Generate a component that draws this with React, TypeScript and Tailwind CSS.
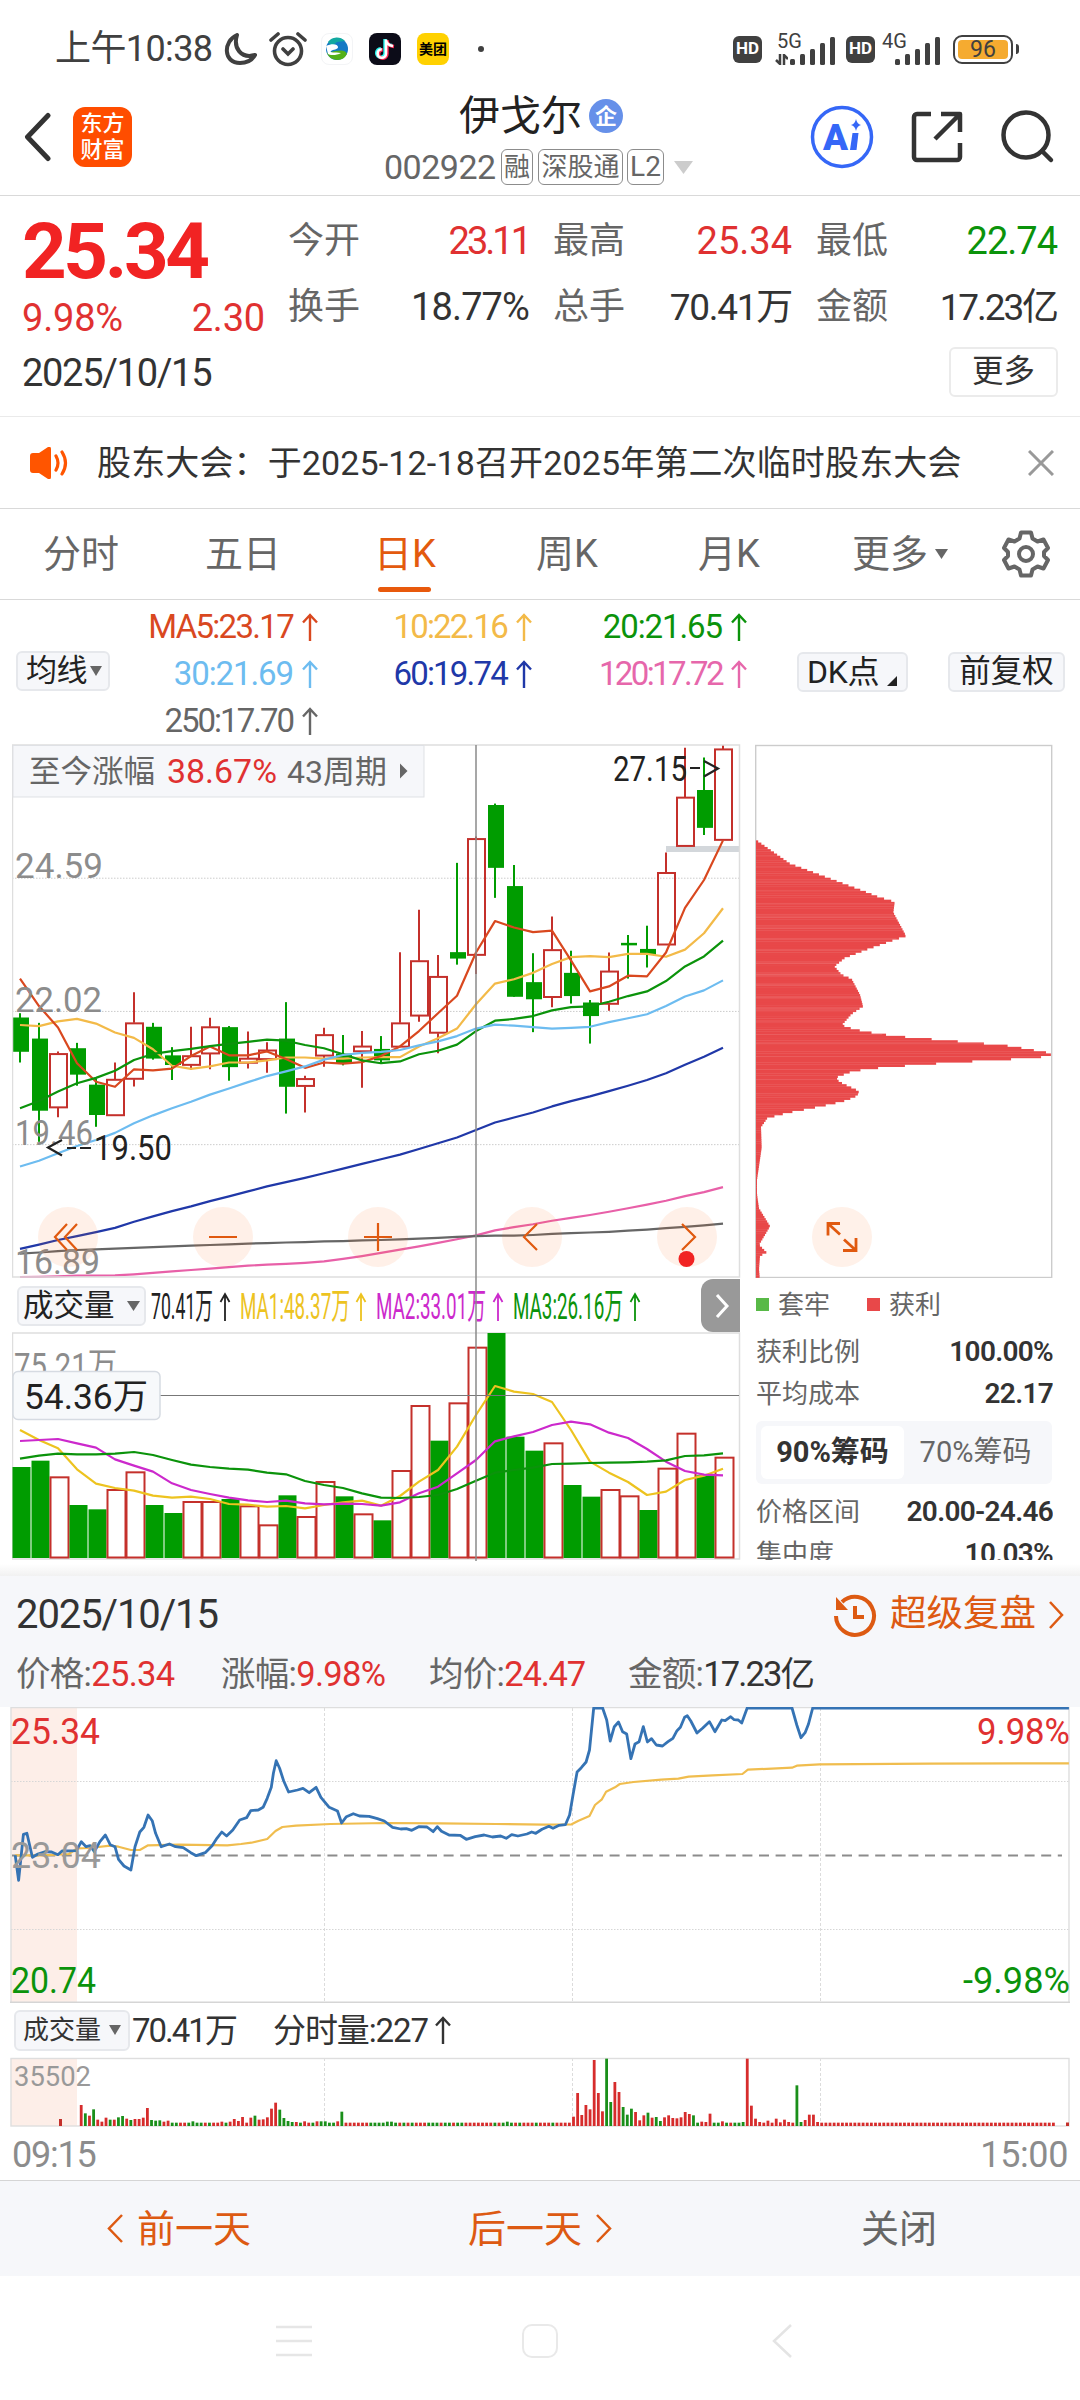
import type { ReactNode } from "react";

const UP = "#c4302b";
const DOWN = "#009c00";

/* top, bottom, high, low of every candle */
const candles: [string, number, number, number, number][] = [
  ["g", 777, 873, 765, 903],
  ["g", 836, 1038, 792, 1125],
  ["r", 878, 1030, 872, 1056],
  ["g", 863, 937, 848, 968],
  ["g", 965, 1050, 948, 1083],
  ["r", 950, 1052, 903, 1052],
  ["r", 792, 950, 706, 970],
  ["g", 803, 892, 792, 895],
  ["g", 883, 910, 860, 952],
  ["r", 884, 911, 803, 924],
  ["r", 803, 879, 778, 922],
  ["g", 804, 916, 801, 954],
  ["r", 891, 905, 816, 920],
  ["r", 868, 895, 846, 932],
  ["g", 836, 971, 734, 1046],
  ["r", 948, 970, 940, 1043],
  ["r", 825, 885, 806, 915],
  ["g", 878, 906, 826, 911],
  ["r", 857, 873, 815, 974],
  ["g", 865, 897, 829, 905],
  ["r", 792, 860, 594, 860],
  ["r", 618, 773, 475, 789],
  ["r", 662, 821, 602, 877],
  ["g", 594, 612, 344, 629],
  ["r", 276, 603, 270, 655],
  ["g", 182, 358, 178, 442],
  ["g", 409, 719, 350, 719],
  ["g", 678, 726, 597, 818],
  ["r", 587, 721, 494, 748],
  ["g", 652, 717, 590, 738],
  ["g", 735, 773, 728, 850],
  ["r", 647, 740, 595, 758],
  ["g", 568, 575, 546, 668],
  ["g", 585, 602, 520, 637],
  ["r", 371, 574, 315, 574],
  ["r", 160, 298, 22, 298],
  ["g", 140, 246, 49, 266],
  ["r", 25, 281, 14, 281],
];

const priceLines: [string, number[]][] = [
  ["#f3ba48", [798, 801, 788, 781, 794, 819, 834, 866, 912, 921, 914, 903, 903, 897, 889, 889, 892, 892, 889, 888, 888, 858, 835, 808, 740, 682, 670, 652, 627, 608, 605, 608, 599, 599, 607, 587, 541, 471]],
  ["#d9481f", [668, 745, 805, 905, 957, 971, 922, 925, 920, 885, 858, 883, 883, 872, 893, 918, 903, 906, 902, 885, 858, 815, 765, 716, 595, 507, 525, 538, 534, 617, 704, 690, 660, 662, 595, 470, 392, 281]],
  ["#0b930b", [1031, 1011, 984, 961, 946, 926, 896, 879, 871, 865, 857, 851, 845, 839, 842, 854, 863, 880, 897, 905, 900, 880, 870, 853, 815, 786, 781, 773, 757, 748, 746, 733, 717, 704, 675, 634, 606, 562]],
  ["#6dbcf0", [1194, 1178, 1157, 1137, 1120, 1100, 1073, 1051, 1031, 1013, 993, 976, 958, 941, 928, 914, 895, 882, 876, 873, 868, 855, 844, 829, 808, 797, 800, 804, 808, 806, 803, 790, 779, 768, 745, 718, 701, 673]],
  ["#2038a8", [1425, 1413, 1400, 1389, 1378, 1366, 1349, 1334, 1319, 1306, 1291, 1278, 1264, 1250, 1238, 1226, 1213, 1200, 1187, 1174, 1161, 1145, 1129, 1113, 1092, 1071, 1057, 1043, 1026, 1011, 998, 983, 968, 952, 933, 909, 887, 862]],
  ["#e860a8", [1504, 1503, 1502, 1500, 1500, 1499, 1496, 1492, 1488, 1484, 1480, 1476, 1472, 1469, 1467, 1464, 1460, 1453, 1445, 1436, 1427, 1418, 1408, 1398, 1387, 1373, 1364, 1356, 1346, 1338, 1330, 1321, 1311, 1301, 1290, 1277, 1266, 1252]],
  ["#666666", [1438, 1435, 1431, 1428, 1426, 1424, 1422, 1420, 1418, 1416, 1414, 1412, 1410, 1409, 1407, 1406, 1404, 1403, 1401, 1400, 1398, 1396, 1394, 1391, 1389, 1388, 1388, 1386, 1383, 1381, 1379, 1377, 1374, 1371, 1367, 1363, 1359, 1354]],
];

const volumes: [string, number][] = [
  ["g", 561], ["g", 542], ["r", 592], ["g", 675], ["g", 688], ["r", 630], ["r", 577], ["g", 675],
  ["g", 699], ["r", 666], ["r", 666], ["g", 657], ["r", 679], ["r", 736], ["g", 646], ["r", 711],
  ["r", 606], ["g", 649], ["r", 703], ["g", 721], ["r", 573], ["r", 378], ["g", 482], ["r", 370],
  ["r", 203], ["g", 159], ["g", 470], ["g", 512], ["r", 490], ["g", 615], ["g", 650], ["r", 630],
  ["r", 649], ["g", 690], ["r", 566], ["r", 461], ["g", 586], ["r", 533],
];

const volumeLines: [string, number[]][] = [
  ["#edc31f", [450, 480, 505, 568, 611, 624, 632, 647, 653, 650, 657, 672, 674, 680, 678, 685, 675, 667, 662, 677, 648, 605, 570, 500, 405, 318, 335, 342, 366, 450, 545, 578, 606, 645, 635, 600, 587, 566]],
  ["#cc29cc", [483, 480, 477, 490, 503, 538, 557, 575, 610, 630, 642, 653, 661, 666, 662, 670, 673, 671, 672, 677, 667, 640, 620, 580, 540, 484, 469, 456, 435, 425, 433, 458, 474, 507, 545, 573, 584, 586]],
  ["#0b930b", [536, 527, 521, 523, 523, 521, 516, 525, 540, 554, 561, 566, 569, 578, 583, 603, 615, 624, 640, 653, 654, 651, 645, 627, 602, 578, 570, 563, 552, 551, 549, 548, 547, 545, 541, 528, 526, 520]],
];

/* chip distribution: level, width */
const chips: [number, number][] = [
  [280, 2], [345, 102], [392, 237], [418, 312], [438, 367], [452, 416], [482, 412], [547, 450],
  [562, 402], [585, 332], [608, 267], [632, 235], [656, 257], [668, 287], [712, 312], [744, 321],
  [765, 287], [797, 257], [806, 285], [815, 325], [828, 417], [833, 482], [839, 559], [845, 635], [851, 712],
  [857, 777], [863, 805], [870, 852], [877, 889], [884, 877], [890, 800], [896, 687], [902, 573],
  [908, 482], [914, 390], [920, 332], [926, 289], [943, 240], [956, 250], [982, 309], [994, 304],
  [1007, 272], [1018, 225], [1030, 162], [1042, 95], [1057, 34], [1082, 15], [1140, 17], [1230, 3],
  [1270, 3], [1310, 9], [1360, 42], [1412, 9], [1434, 32], [1442, 12], [1480, 9], [1503, 11],
];
const chipSeams = [323, 354, 390, 396, 421, 457, 488, 494, 519, 525, 555, 586, 623, 654, 659, 684, 720, 751, 757, 788, 823, 849, 885, 921, 949, 989, 1018, 1048];

const pricePath =
  "22,466 27,541 34,403 39,400 47,472 55,462 66,455 75,456 84,464 90,453 111,452 118,425 125,440 131,437 137,455 145,425 153,405 160,434 167,440 172,478 180,498 190,510 196,440 203,396 209,382 215,345 221,362 226,400 234,440 246,432 255,440 266,443 277,458 285,467 298,458 308,437 315,415 322,396 329,408 338,390 348,360 358,353 364,332 375,330 382,322 388,295 394,262 397,220 401,182 406,205 412,243 419,276 432,270 440,265 449,278 459,262 466,292 478,322 490,333 496,369 503,350 513,341 522,348 536,349 548,356 558,363 570,382 582,387 590,386 598,391 608,380 620,381 629,395 635,380 641,394 652,405 668,406 677,418 690,410 703,405 715,411 727,408 735,415 743,404 752,408 765,402 772,396 778,400 787,388 797,379 803,385 812,376 821,374 827,345 832,285 838,216 844,203 851,186 856,150 862,24 875,24 881,60 886,123 892,80 898,66 904,95 910,102 916,176 922,132 928,125 934,80 940,126 946,116 953,135 962,138 970,125 977,115 983,92 988,82 994,52 998,47 1003,63 1012,99 1020,85 1030,65 1038,95 1048,60 1053,62 1061,50 1066,59 1072,60 1077,69 1085,24 1150,24 1157,75 1163,113 1169,98 1174,72 1180,24 1552,24";
const averagePath =
  "22,466 60,466 100,462 112,445 130,444 160,437 172,440 190,450 203,450 215,436 260,434 330,436 350,432 365,428 388,417 400,393 410,381 430,377 480,372 560,369 640,370 720,372 790,374 830,373 840,362 856,348 864,315 874,298 880,275 893,262 900,252 920,246 960,239 985,236 1000,230 1035,226 1078,222 1086,209 1150,203 1157,197 1190,193 1350,191 1552,190";

/* minute volume: height and colour runs, anything not listed is a flat red bar */
const minuteBars: Record<number, [number, string]> = {};
const fill = (start: number, list: string) =>
  list.split(" ").forEach((s, i) => {
    minuteBars[start + i] = [parseInt(s), s.slice(-1)];
  });
fill(0, "63r 38g 31r 50g 19r 13r 25r 19g 19r 26g 30g 22r 18g 21r 21r 25r 54r 18g 16g 17g 13r 16r 10g 10g 10r 10r 10g 14g 10g 10g 10r 10g 10r 10r 13r 10g 13r 21r 15r 27r 10r 25r 31g 19r 20r 26r 52r 70r 49g 24g 15g 12g 12r 10g 14r 10r 10g 14r 14g 14g 10g 10g 14r 43g");
fill(70, "10g 10g 10g 10g 13g 13g 10g 10r 10g 10r 10g 10r 10r 10r 10g 10g 10g 10r 10g 10g 10r 10g 10g 10r");
fill(100, "10g 10r 10g 13g 10g 10r 10g");
fill(110, "10g 10r 10r 10r 10g 10r 10r 10r 10r 28r 99r 33r 63r 50r 198r 99r 44r 202g 72g 132r 102r 57g 34g 52g 42r 17r 32r 40g 25r 27g 15g 26r 32r 24r 23r 26r 42r 36r 32g 10g 13r 12r 37r 10g 10g 14r 10g 10r 10g 10g 12g 202r 61r 22r 12r 10r 16r 10r 22r 11r 19r 12r 10r 122g 12g 18r 34r 34r 12r");

const cx = (i: number) => 20 + 19 * i;
const py = (v: number) => 740 + v / 2.8;
const vy = (v: number) => 1280 + v / 3;
const minute = (pts: string) =>
  pts
    .split(" ")
    .map((p) => p.split(",").map(Number))
    .map(([x, y]) => `${(x / 1.452).toFixed(1)},${(1700 + y / 3).toFixed(1)}`)
    .join(" ");

function chipWidth(v: number) {
  const i = Math.max(1, chips.findIndex((c) => c[0] >= v));
  const [a, wa] = chips[i - 1];
  const [b, wb] = chips[i];
  return (wa + ((wb - wa) * (v - a)) / (b - a)) / 3;
}

/* svg label squeezed to a fixed width */
function Label({ x, y, w, size, fill, children }: { x: number; y: number; w: number; size: number; fill: string; children: ReactNode }) {
  return (
    <text x={x} y={y} fontSize={size} fill={fill} textLength={w} lengthAdjust="spacingAndGlyphs">
      {children}
    </text>
  );
}

function ArrowUp({ className = "" }: { className?: string }) {
  return (
    <svg width="16" height="28" viewBox="0 0 16 28" fill="none" stroke="currentColor" strokeWidth="2.4" className={className}>
      <path d="M8 28V2M1 9.5L8 2l7 7.5" />
    </svg>
  );
}

function Triangle({ className }: { className: string }) {
  return (
    <svg viewBox="0 0 12 10" preserveAspectRatio="none" fill="currentColor" className={className}>
      <path d="M0 0h12L6 10z" />
    </svg>
  );
}

function Signal() {
  return (
    <svg width="45" height="28" viewBox="0 0 45 28" fill="#404040">
      <rect x="0" y="22" width="5" height="6" rx="1.5" />
      <rect x="10" y="17" width="5" height="11" rx="1.5" />
      <rect x="20" y="12" width="5" height="16" rx="1.5" />
      <rect x="30" y="6" width="5" height="22" rx="1.5" />
      <rect x="40" y="0" width="5" height="28" rx="1.5" />
    </svg>
  );
}

function StatusBar() {
  return (
    <div className="flex h-[84px] items-center pt-[14px] pl-[55px] text-[#404040]">
      <span className="w-[169px] text-[36px] leading-none tracking-[-0.6px] whitespace-nowrap">上午10:38</span>
      <svg width="33" height="34" viewBox="0 0 33 34" fill="none" stroke="#404040" strokeWidth="4" strokeLinejoin="round">
        <path d="M13 3C-1 9-1 31 16 31c7 0 12-3 15-8C17 27 9 16 13 3z" />
      </svg>
      <svg width="38" height="36" viewBox="0 0 38 36" fill="none" stroke="#404040" strokeWidth="3.6" strokeLinecap="round" className="ml-3">
        <circle cx="19" cy="20" r="13.5" />
        <path d="M2 9l7-6M36 9l-7-6M14 18l5 5 5-5" />
      </svg>
      <div className="ml-[14px] flex size-8 items-center justify-center rounded-lg border border-gray-100">
        <svg width="24" height="24" viewBox="0 0 24 24">
          <circle cx="12" cy="12" r="11" fill="#1479c4" />
          <path d="M3 5a11 11 0 0117-1l-8 1-5 4z" fill="#12a9a0" />
          <path d="M2 16a11 11 0 0020 1c-2-5-8-3-12-3z" fill="#54b018" />
          <path d="M1 9c6-3 12-2 12 1s-5 2-7 4 4 1 10 2c-5 3-12 2-13 1z" fill="#fff" />
        </svg>
      </div>
      <div className="ml-4 flex size-8 items-center justify-center rounded-lg bg-[#0c0c18]">
        <svg width="22" height="24" viewBox="0 0 22 24" fill="none" strokeWidth="3.4">
          <path d="M11 2v14a4.2 4.2 0 1 1-4.2-4.2M11 3c1 4 3 5 7 5.5" stroke="#25f4ee" />
          <path d="M13 3v14a4.2 4.2 0 1 1-4.2-4.2M13 4c1 4 3 5 7 5.5" stroke="#fe2c55" />
          <path d="M12 2.5v14a4.2 4.2 0 1 1-4.2-4.2M12 3.5c1 4 3 5 7 5.5" stroke="#fff" strokeWidth="2.6" />
        </svg>
      </div>
      <div className="ml-4 flex size-8 items-center justify-center rounded-lg bg-[#ffd100] text-[14px] leading-none font-bold text-black">美团</div>
      <div className="ml-[29px] size-[6px] rounded-full bg-[#404040]" />
      <div className="ml-[249px] flex h-[27px] w-[29px] items-center justify-center rounded-md bg-[#404040] text-[17px] font-bold text-white">HD</div>
      <div className="relative ml-[13px] h-[32px] w-[60px]">
        <span className="absolute top-[-2px] left-[2px] text-[20px] leading-none">5G</span>
        <svg width="13" height="11" viewBox="0 0 13 11" stroke="#404040" strokeWidth="2.5" fill="none" className="absolute bottom-0 left-0">
          <path d="M5 0v10L1 6M9 11V1l4 4" />
        </svg>
        <div className="absolute right-0 bottom-0">
          <Signal />
        </div>
      </div>
      <div className="ml-[11px] flex h-[27px] w-[29px] items-center justify-center rounded-md bg-[#404040] text-[17px] font-bold text-white">HD</div>
      <div className="relative ml-[7px] h-[32px] w-[58px]">
        <span className="absolute top-[-2px] left-0 text-[20px] leading-none">4G</span>
        <div className="absolute right-0 bottom-0">
          <Signal />
        </div>
      </div>
      <div className="ml-[13px] flex h-[29px] w-[60px] rounded-[9px] border-[2.5px] border-[#404040] p-[3px]">
        <div className="flex flex-1 items-center justify-center rounded-[4px] bg-[#f5ab30] text-[23px] leading-none">96</div>
      </div>
      <div className="ml-[3px] h-[10px] w-[3px] rounded-r bg-[#404040]" />
    </div>
  );
}

function Header() {
  return (
    <header className="flex h-28 items-start border-b border-[#d9d9d9]">
      <svg width="27" height="50" viewBox="0 0 27 50" fill="none" stroke="#333" strokeWidth="5" strokeLinejoin="round" strokeLinecap="round" className="mt-7 ml-6">
        <path d="M24 3.5L3.5 25 24 46.5" />
      </svg>
      <div className="mt-[23px] ml-[22px] flex h-[60px] w-[59px] flex-col items-center justify-center rounded-xl bg-[#ff4d00] text-[22px] leading-[26px] font-medium text-white">
        <span>东方</span>
        <span>财富</span>
      </div>
      <div className="ml-[252px] flex w-[310px] flex-col">
        <div className="mt-2 ml-[75px] flex h-12 items-center">
          <span className="text-[41px] leading-none text-[#222]">伊戈尔</span>
          <span className="ml-[7px] flex size-[34px] items-center justify-center rounded-full bg-[#6690e9] text-[22px] font-bold text-white">企</span>
        </div>
        <div className="mt-[9px] flex h-9 items-center text-[#666]">
          <span className="w-[117px] text-[34px] leading-none tracking-[-0.5px]">002922</span>
          <span className="flex h-9 w-8 items-center justify-center rounded-[6px] border border-[#8c8c8c] text-[26px]">融</span>
          <span className="ml-[5px] flex h-9 w-[85px] items-center justify-center rounded-[6px] border border-[#8c8c8c] text-[26px]">深股通</span>
          <span className="ml-1 flex h-9 w-[37px] items-center justify-center rounded-[6px] border border-[#8c8c8c] text-[28px]">L2</span>
          <Triangle className="ml-[10px] h-[13px] w-[19px] text-[#ccc]" />
        </div>
      </div>
      <svg width="64" height="64" viewBox="0 0 64 64" className="mt-[21px] ml-[116px]">
        <circle cx="32" cy="32" r="29.5" fill="none" stroke="#3567f7" strokeWidth="3.5" />
        <text x="13" y="45" fontSize="37" fontWeight="900" fill="#3567f7" textLength="25" lengthAdjust="spacingAndGlyphs">
          A
        </text>
        <path d="M42.500 28h6l-2 17h-6.500z" fill="#3567f7" />
        <path d="M46 14q1 5 5 6-4 1-5 6-1-5-5-6 4-1 5-6z" fill="#3567f7" />
      </svg>
      <svg width="54" height="54" viewBox="0 0 54 54" fill="none" stroke="#333" strokeWidth="4.5" strokeLinejoin="round" className="mt-[26px] ml-[36px]">
        <path d="M21 4H7a3 3 0 00-3 3v40a3 3 0 003 3h40a3 3 0 003-3V33M31 4h19v18M50 4L25 29" />
      </svg>
      <svg width="56" height="56" viewBox="0 0 56 56" fill="none" stroke="#333" strokeWidth="4.5" strokeLinecap="round" className="mt-[24px] ml-[36px]">
        <circle cx="26" cy="27" r="22.5" />
        <path d="M42 43l9 9" />
      </svg>
    </header>
  );
}

function Quote({ label, value, className }: { label: string; value: string; className: string }) {
  return (
    <div className="flex h-[66px] items-center justify-between leading-none">
      <span className="text-[36px] text-[#666]">{label}</span>
      <span className={className}>{value}</span>
    </div>
  );
}

function Summary() {
  return (
    <section className="flex h-[221px] flex-col border-b border-[#eaeaea] pl-[22px]">
      <div className="flex h-[141px] pt-3">
        <div className="w-[266px] leading-none">
          <div className="mt-[5px] text-[78px] leading-[78px] font-bold tracking-[-3.4px] text-[#f12323]">25.34</div>
          <div className="mt-[8px] flex w-[243px] justify-between text-[38px] tracking-[-0.2px] text-[#e03131]">
            <span>9.98%</span>
            <span>2.30</span>
          </div>
        </div>
        <div className="grid w-[769px] grid-cols-[241px_239px_241px] gap-x-[24px] text-[38px]">
          <Quote label="今开" value="23.11" className="tracking-[-3px] text-[#e03131]" />
          <Quote label="最高" value="25.34" className="text-[#e03131]" />
          <Quote label="最低" value="22.74" className="tracking-[-1px] text-[#0b930b]" />
          <Quote label="换手" value="18.77%" className="tracking-[-0.9px] text-[#333]" />
          <Quote label="总手" value="70.41万" className="text-[37px] tracking-[-1.3px] text-[#333]" />
          <Quote label="金额" value="17.23亿" className="text-[37px] tracking-[-2.1px] text-[#333]" />
        </div>
      </div>
      <div className="flex items-center justify-between pt-[10px] pr-[22px]">
        <span className="pt-[2px] text-[38px] leading-none tracking-[-1.3px] text-[#333]">2025/10/15</span>
        <span className="flex h-[50px] w-[109px] items-center justify-center rounded-md border-2 border-[#ebebeb] text-[31.5px] text-[#333]">更多</span>
      </div>
    </section>
  );
}

function Notice() {
  return (
    <div className="flex h-[92px] items-center border-b border-[#d9d9d9] pl-[30px]">
      <svg width="40" height="32" viewBox="0 0 40 32" className="text-[#ff5500]">
        <path d="M0 9q0-3 3-3h6l9-6q3-1 3 2v28q0 3-3 2l-9-6H3q-3 0-3-3z" fill="currentColor" />
        <path d="M26 9q4 7 0 14M32 5q7 11 0 22" stroke="currentColor" strokeWidth="3.2" fill="none" strokeLinecap="round" />
      </svg>
      <span className="ml-[27px] w-[931px] text-[34px] leading-none tracking-[0.14px] whitespace-nowrap text-[#333]">股东大会：于2025-12-18召开2025年第二次临时股东大会</span>
      <svg width="26" height="26" viewBox="0 0 26 26" stroke="#999" strokeWidth="3">
        <path d="M1 1l24 24M25 1L1 25" />
      </svg>
    </div>
  );
}

function Tabs() {
  return (
    <nav className="flex h-[91px] items-center border-b border-[#d9d9d9] text-[38px] leading-none text-[#666]">
      <span className="w-[162px] text-center">分时</span>
      <span className="w-[162px] text-center">五日</span>
      <div className="relative w-[162px] text-center text-[#e35a0e]">
        日K
        <div className="absolute -bottom-[19px] left-[54px] h-[5px] w-[53px] rounded-full bg-[#e8590c]" />
      </div>
      <span className="w-[162px] text-center">周K</span>
      <span className="w-[162px] text-center">月K</span>
      <span className="ml-[42px] w-[83px]">更多</span>
      <Triangle className="h-[10px] w-[13px]" />
      <svg width="50" height="50" viewBox="0 0 50 50" fill="none" stroke="#666" strokeWidth="4" strokeLinejoin="round" className="ml-[53px]">
        <path d="M20 3.5h10l1.5 6 5 3 6-2 4.5 8.5-4 4v4l4 4-4.5 8.5-6-2-5 3-1.500 6H20l-1.500-6-5-3-6 2L3 31l4-4v-4l-4-4 4.500-8.500 6 2 5-3z" />
        <circle cx="25" cy="25" r="7" />
      </svg>
    </nav>
  );
}

function Average({ className, children }: { className: string; children: string }) {
  return (
    <div className={`flex h-[47px] items-center justify-end gap-[9px] text-[33px] leading-none ${className}`}>
      {children}
      <ArrowUp />
    </div>
  );
}

function Averages() {
  return (
    <div className="flex h-[144px] items-start">
      <div className="mt-[51px] ml-4 flex h-10 w-[94px] items-center rounded-md border-2 border-[#e6e8ec] bg-[#f6f7fa] pl-[8px] text-[31px] tracking-[-0.5px] text-[#222]">
        均线
        <Triangle className="ml-[3px] h-[10px] w-3 text-[#666]" />
      </div>
      <div className="mt-[3px] grid grid-cols-[208px_214px_215px]">
        <Average className="tracking-[-1.7px] text-[#d9481f]">MA5:23.17</Average>
        <Average className="tracking-[-1.8px] text-[#f3ba48]">10:22.16</Average>
        <Average className="tracking-[-1.1px] text-[#0b930b]">20:21.65</Average>
        <Average className="tracking-[-1.1px] text-[#6dbcf0]">30:21.69</Average>
        <Average className="tracking-[-1.8px] text-[#2038a8]">60:19.74</Average>
        <Average className="tracking-[-2.6px] text-[#e667ab]">120:17.72</Average>
        <Average className="tracking-[-2px] text-[#666]">250:17.70</Average>
      </div>
      <div className="mt-[52px] ml-[50px] flex h-10 w-[111px] items-center rounded-md border-2 border-[#e6e8ec] bg-[#f6f7fa] pl-[8px] text-[32px] tracking-[-0.3px] text-[#222]">
        DK点
        <svg width="10" height="10" className="mt-[18px] ml-[8px] shrink-0">
          <path d="M10 0v10H0z" fill="#222" />
        </svg>
      </div>
      <div className="mt-[52px] ml-10 flex h-10 w-[117px] items-center justify-center rounded-md border-2 border-[#e6e8ec] bg-[#f6f7fa] text-[31.5px] text-[#222]">前复权</div>
    </div>
  );
}

function KLine() {
  return (
    <svg width="729" height="534" viewBox="12 744 729 534" className="block">
      {[387, 760, 1133].map((v) => (
        <path key={v} d={`M12 ${py(v)}H739`} stroke="#ccc" strokeWidth="1" strokeDasharray="1.5 1.5" />
      ))}
      <rect x="666" y="846" width="73" height="6" fill="#d3d7db" />
      {candles.map(([c, top, bottom, high, low], i) =>
        c === "g" ? (
          <g key={i} fill={DOWN}>
            <rect x={cx(i) - 1} y={py(high)} width="2" height={py(low) - py(high)} />
            <rect x={cx(i) - 7} y={py(top)} width="16" height={py(bottom) - py(top)} />
          </g>
        ) : (
          <g key={i} fill="none" stroke={UP} strokeWidth="2">
            <path d={`M${cx(i)} ${py(high)}V${py(top)}M${cx(i)} ${py(bottom)}V${py(low)}`} />
            <rect x={cx(i) - 8} y={py(top) + 0.5} width="17" height={py(bottom) - py(top) - 1} />
          </g>
        ),
      )}
      {priceLines.map(([color, values]) => (
        <polyline key={color} points={values.map((v, i) => `${cx(i)},${py(v)}`).join(" ")} fill="none" stroke={color} strokeWidth="2.2" strokeLinejoin="round" />
      ))}
      <rect x="12.5" y="745" width="727" height="532" fill="none" stroke="#dedede" strokeWidth="1.5" />
      <rect x="13" y="745.5" width="411" height="51.5" fill="#f6f7fa" stroke="#dfe1e5" />
      <Label x={29} y={782} w={126} size={31} fill="#666">至今涨幅</Label>
      <Label x={167} y={783} w={110} size={33} fill="#e03131">38.67%</Label>
      <Label x={287} y={783} w={100} size={32} fill="#666">43周期</Label>
      <path d="M400 763.5v15l7.500-7.500z" fill="#666" />
      <Label x={15} y={878} w={88} size={35} fill="#8c8c8c">24.59</Label>
      <Label x={15} y={1012} w={87} size={35} fill="#8c8c8c">22.02</Label>
      <Label x={15} y={1145} w={78} size={35} fill="#8c8c8c">19.46</Label>
      <Label x={15} y={1274} w={85} size={35} fill="#8c8c8c">16.89</Label>
      <Label x={94} y={1160} w={78} size={35} fill="#222">19.50</Label>
      <path d="M62 1140l-14 7.500 14 8M67 1148h9M80 1148h11" stroke="#222" strokeWidth="2.2" fill="none" />
      <Label x={613} y={781} w={74} size={35} fill="#222">27.15</Label>
      <path d="M690 768h10M704 761l14 7.500-14 8" stroke="#222" strokeWidth="2.2" fill="none" />
      {[68, 223, 378, 532, 687].map((x) => (
        <circle key={x} cx={x} cy="1237" r="30" fill="#fb6a1a" fillOpacity="0.1" />
      ))}
      <g fill="none" stroke="#e0590f" strokeWidth="2.2">
        <path d="M67 1224l-12 13 12 13M77 1224l-12 13 12 13M209 1237h28M364 1237h28M378 1223v28M537 1224l-13 13 13 13M682 1224l13 13-13 13" />
      </g>
      <circle cx="686.5" cy="1259" r="8" fill="#f12323" />
      <path d="M476 745v533" stroke="#8a8a8a" strokeWidth="1.5" />
    </svg>
  );
}

function VolumeHeader() {
  return (
    <div className="flex h-[54px]">
      <div className="mt-2 ml-[5px] flex h-10 w-[129px] items-center rounded-md border-2 border-[#e6e8ec] bg-[#f6f7fa] pl-[4px] text-[30.5px] text-[#222]">
        成交量
        <Triangle className="ml-[12px] h-[10px] w-[13px] text-[#666]" />
      </div>
      <svg width="555" height="54" viewBox="146 1278 555 54">
        <Label x={151} y={1319} w={62} size={36} fill="#222">70.41万</Label>
        <Label x={240} y={1319} w={110} size={36} fill="#edc31f">MA1:48.37万</Label>
        <Label x={376} y={1319} w={110} size={36} fill="#cc29cc">MA2:33.01万</Label>
        <Label x={513} y={1319} w={110} size={36} fill="#0b930b">MA3:26.16万</Label>
        {[["#222", 225], ["#edc31f", 361], ["#cc29cc", 498], ["#0b930b", 635]].map(([c, x]) => (
          <path key={x} d={`M${x} 1321v-27m-4.500 8l4.500-8 4.500 8`} stroke={c as string} strokeWidth="1.8" fill="none" />
        ))}
        <path d="M476 1278v54" stroke="#8a8a8a" strokeWidth="1.5" />
      </svg>
      <div className="mt-[1px] flex h-[53px] w-[39px] items-center justify-center rounded-l-xl bg-[#999]">
        <svg width="16" height="26" viewBox="0 0 16 26" fill="none" stroke="#fff" strokeWidth="3" className="ml-1">
          <path d="M2 2l10 11L2 24" />
        </svg>
      </div>
    </div>
  );
}

function Volume() {
  return (
    <svg width="729" height="229" viewBox="12 1332 729 229" className="block">
      <path d="M12 1333H739.5V1559H12.5V1333" fill="none" stroke="#dedede" strokeWidth="1.5" />
      <Label x={14} y={1378} w={103} size={35} fill="#8c8c8c">75.21万</Label>
      {volumes.map(([c, top], i) =>
        c === "g" ? (
          <rect key={i} x={cx(i) - 7.5} y={vy(top)} width="18" height={1558 - vy(top)} fill={DOWN} />
        ) : (
          <rect key={i} x={cx(i) - 7.5} y={vy(top)} width="18" height={1557.5 - vy(top)} fill="#fff" stroke={UP} strokeWidth="2" />
        ),
      )}
      {volumeLines.map(([color, values]) => (
        <polyline key={color} points={values.map((v, i) => `${cx(i)},${vy(v)}`).join(" ")} fill="none" stroke={color} strokeWidth="2.2" strokeLinejoin="round" />
      ))}
      <path d="M160 1395.5H739" stroke="#777" />
      <path d="M476 1332v229" stroke="#8a8a8a" strokeWidth="1.5" />
      <rect x="13" y="1371.5" width="147" height="48" rx="5" fill="#f7f9fb" stroke="#d6dbe2" strokeWidth="1.5" />
      <Label x={24} y={1409} w={124} size={35} fill="#222">54.36万</Label>
    </svg>
  );
}

function Chips() {
  const rows = Array.from({ length: 200 }, (_, i) => 281 + i * 6.15).filter((v) => v < 1501);
  return (
    <svg width="298" height="534" viewBox="755 744 298 534" className="block">
      <rect x="755.7" y="745.5" width="296" height="532" fill="none" stroke="#ccc" strokeWidth="1.4" />
      {rows.map((v) => (
        <rect key={v} x="756" y={py(v)} width={chipWidth(v + 2)} height="2.6" fill="#e84849" />
      ))}
      {chipSeams.map((v) => (
        <rect key={v} x="756" y={py(v)} width={chipWidth(v) - 1} height="1" fill="#fff" fillOpacity="0.12" />
      ))}
      <circle cx="842" cy="1237" r="30" fill="#fff1e9" />
      <path d="M840 1223.5h-12v12M828 1223.5l12 11M844 1239.5l12 11M856 1238v12.500h-13" fill="none" stroke="#e0590f" strokeWidth="2.8" />
    </svg>
  );
}

function ChipRow({ label, value }: { label: string; value: string }) {
  return (
    <div className="flex h-[42px] shrink-0 items-center justify-between leading-none">
      <span className="text-[26px] text-[#666]">{label}</span>
      <span className="text-[28px] font-semibold tracking-[-0.7px] text-[#333]">{value}</span>
    </div>
  );
}

function ChipStats() {
  return (
    <div className="ml-px flex h-[282px] w-[297px] flex-col overflow-hidden">
      <div className="flex h-[53px] shrink-0 items-center text-[26px] leading-none text-[#666]">
        <div className="size-[13px] bg-[#58b947]" />
        <span className="ml-[9px] w-[89px]">套牢</span>
        <div className="size-[13px] bg-[#e84849]" />
        <span className="ml-[9px]">获利</span>
      </div>
      <ChipRow label="获利比例" value="100.00%" />
      <ChipRow label="平均成本" value="22.17" />
      <div className="mt-[6px] mr-px mb-[7px] flex h-[63px] shrink-0 items-center rounded-md bg-[#f6f7fa] p-[5px] text-[29px] leading-none">
        <span className="flex h-[53px] w-[143px] items-center justify-center rounded-md bg-white font-bold text-[#333]">90%筹码</span>
        <span className="flex-1 text-center text-[#666]">70%筹码</span>
      </div>
      <ChipRow label="价格区间" value="20.00-24.46" />
      <ChipRow label="集中度" value="10.03%" />
    </div>
  );
}

function Field({ label, value, className }: { label: string; value: string; className: string }) {
  return (
    <span className="text-[#666]">
      {label}:<span className={className}>{value}</span>
    </span>
  );
}

function DayPanel() {
  return (
    <section className="h-[131px] bg-[#f6f7fa]">
      <div className="flex h-[77px] items-center pl-[16px]">
        <span className="w-[816px] text-[40px] leading-none tracking-[-1.1px] text-[#333]">2025/10/15</span>
        <svg width="46" height="46" viewBox="0 0 46 46" fill="none" stroke="#dd5a12" strokeWidth="4">
          <path d="M4 24a19 19 0 1 0 6-14" />
          <path d="M4 5v13h12z" fill="#dd5a12" stroke="none" />
          <path d="M23 14v11h9" />
        </svg>
        <span className="ml-[12px] text-[36.5px] leading-none text-[#dd5a12]">超级复盘</span>
        <svg width="17" height="28" viewBox="0 0 17 28" fill="none" stroke="#dd5a12" strokeWidth="2.5" className="ml-[12px]">
          <path d="M2 1l12 13L2 27" />
        </svg>
      </div>
      <div className="grid h-[42px] grid-cols-[205px_208px_199px_auto] items-center pl-[16px] text-[34.5px] leading-none tracking-[-0.7px]">
        <Field label="价格" value="25.34" className="text-[#e03131]" />
        <Field label="涨幅" value="9.98%" className="text-[#e03131]" />
        <Field label="均价" value="24.47" className="tracking-[-1.2px] text-[#e03131]" />
        <Field label="金额" value="17.23亿" className="tracking-[-1.9px] text-[#333]" />
      </div>
    </section>
  );
}

function Intraday() {
  return (
    <svg width="1080" height="296" viewBox="0 1707 1080 296" className="block">
      <rect x="11" y="1707" width="66" height="295" fill="#fdeee8" />
      <path d="M324.5 1708v294M572.5 1708v294M820.5 1708v294" stroke="#dcdcdc" strokeDasharray="3 2" />
      <path d="M11 1781.5h1058M11 1929.5h1058" stroke="#d6d6d6" strokeDasharray="1.5 1.5" />
      <path d="M11 2002V1707.5H1069V2002" fill="none" stroke="#dedede" strokeWidth="1.4" />
      <path d="M10 2002.5h1060" stroke="#d5d5d5" strokeWidth="2" />
      <path d="M12 1855.5H1062" stroke="#8c8c8c" strokeWidth="2" strokeDasharray="10 6.6" />
      <polyline points={minute(averagePath)} fill="none" stroke="#f0bd4e" strokeWidth="2.2" strokeLinejoin="round" />
      <polyline points={minute(pricePath)} fill="none" stroke="#3573b4" strokeWidth="2.8" strokeLinejoin="round" />
      <Label x={11} y={1868} w={90} size={36} fill="#999">23.04</Label>
      <Label x={11} y={1744} w={89} size={36} fill="#e03131">25.34</Label>
      <Label x={977} y={1744} w={93} size={36} fill="#e03131">9.98%</Label>
      <Label x={11} y={1993} w={85} size={36} fill="#0b930b">20.74</Label>
      <Label x={963} y={1993} w={107} size={36} fill="#0b930b">-9.98%</Label>
    </svg>
  );
}

function MinuteVolume() {
  return (
    <svg width="1080" height="70" viewBox="0 2057 1080 70" className="block">
      <rect x="11" y="2058" width="66" height="68" fill="#fdeee8" />
      <path d="M324.5 2058v68M572.5 2058v68M820.5 2058v68" stroke="#dcdcdc" strokeDasharray="3 2" />
      <rect x="11" y="2058.5" width="1058" height="67.5" fill="none" stroke="#dedede" strokeWidth="1.4" />
      <Label x={14} y={2086} w={77} size={28} fill="#999">35502</Label>
      {Array.from({ length: 236 }, (_, i) => {
        const [h, c] = minuteBars[i] ?? [10, "r"];
        return <rect key={i} x={79.8 + i * 4.137} y={2126 - h / 3} width="2.8" height={h / 3} fill={c === "r" ? "#d62c2c" : "#1a8f1a"} />;
      })}
      <rect x="59" y="2119" width="3" height="7" fill={UP} />
      <rect x="1066" y="2122.5" width="3" height="3.5" fill={UP} />
    </svg>
  );
}

export default function App() {
  return (
    <div className="h-[2400px] w-[1080px] overflow-hidden bg-white [font-family:Roboto,'Noto_Sans_CJK_SC',sans-serif]">
      <StatusBar />
      <Header />
      <Summary />
      <Notice />
      <Tabs />
      <Averages />

      <div className="flex h-[820px]">
        <div className="ml-3 w-[729px]">
          <KLine />
          <VolumeHeader />
          <Volume />
        </div>
        <div className="ml-[14px]">
          <Chips />
          <ChipStats />
        </div>
      </div>
      <div className="h-3 bg-linear-to-b from-white to-[#f1f1f1]" />

      <DayPanel />
      <Intraday />
      <div className="flex h-[54px] items-center pl-[14px] text-[33px] leading-none text-[#333]">
        <div className="flex h-[41px] w-[116px] items-center rounded-md border-2 border-[#e6e8ec] bg-[#f6f7fa] pl-[7px] text-[26px]">
          成交量
          <Triangle className="ml-[8px] h-[10px] w-3 text-[#666]" />
        </div>
        <span className="ml-[2px] w-[141px] tracking-[-2px]">70.41万</span>
        <span className="tracking-[-1.1px]">分时量:227</span>
        <ArrowUp className="ml-[7px]" />
      </div>
      <MinuteVolume />
      <div className="flex h-[53px] items-center justify-between pt-[2px] pr-[12px] pl-[12px] text-[36px] leading-none tracking-[-1.2px] text-[#8c8c8c]">
        <span>09:15</span>
        <span className="tracking-[-0.4px]">15:00</span>
      </div>

      <footer className="flex h-24 items-center border-t border-[#d5d5d5] bg-[#f6f7fa] text-[38px] leading-none text-[#dd5a12]">
        <svg width="18" height="29" viewBox="0 0 18 29" fill="none" stroke="currentColor" strokeWidth="2.5" className="ml-[106px]">
          <path d="M16 1L3 14.5 16 28" />
        </svg>
        <span className="ml-[13px] w-[331px]">前一天</span>
        <span>后一天</span>
        <svg width="18" height="29" viewBox="0 0 18 29" fill="none" stroke="currentColor" strokeWidth="2.5" className="ml-[13px]">
          <path d="M2 1l13 13.5L2 28" />
        </svg>
        <span className="ml-[248px] text-[#666]">关闭</span>
      </footer>

      <div className="flex h-[123px] items-center pt-[6px] pl-[276px]">
        <svg width="36" height="36" viewBox="0 0 36 36" stroke="#e6e6e6" strokeWidth="2.5">
          <path d="M0 4h36M0 18h36M0 32h36" />
        </svg>
        <div className="ml-[210px] h-[34px] w-[36px] rounded-[10px] border-2 border-[#e9e9e9]" />
        <svg width="22" height="36" viewBox="0 0 22 36" fill="none" stroke="#e4e4e4" strokeWidth="2.5" className="ml-[213px]">
          <path d="M20 2L3 18l17 16" />
        </svg>
      </div>
    </div>
  );
}
